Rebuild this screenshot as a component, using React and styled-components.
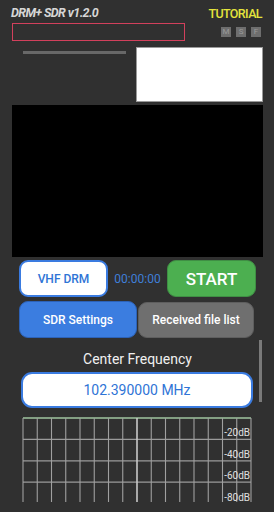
import React from "react";
import styled, { createGlobalStyle } from "styled-components";

const Global = createGlobalStyle`
  body {
    margin: 0;
    background: #303030;
    font-family: Roboto, "Liberation Sans", sans-serif;
  }
`;

const Screen = styled.div`
  width: 274px;
  height: 512px;
  overflow: hidden;
  background: #303030;
`;

const Header = styled.div`
  display: flex;
  justify-content: space-between;
  align-items: center;
  padding: 5px 12px 0 11px;
  height: 14px;
`;

const Title = styled.div`
  font-size: 12.5px;
  font-weight: bold;
  font-style: italic;
  letter-spacing: -0.6px;
  color: #d6d6d6;
`;

const Tutorial = styled.div`
  font-size: 12.5px;
  font-weight: 500;
  letter-spacing: -0.6px;
  color: #e4e43c;
  margin-top: 2px;
`;

const StatusRow = styled.div`
  display: flex;
  justify-content: space-between;
  align-items: center;
  padding: 4px 13px 0 12px;
`;

const StatusBox = styled.div`
  width: 171px;
  height: 16px;
  border: 1.5px solid #d2405c;
`;

const Modes = styled.div`
  display: flex;
  gap: 5px;
`;

const ModeKey = styled.div`
  width: 10px;
  height: 10px;
  background: #6e6e6e;
  color: #9a9a9a;
  font-size: 8px;
  line-height: 10px;
  text-align: center;
`;

const InfoRow = styled.div`
  display: flex;
  align-items: flex-start;
  padding: 6px 11px 0 23px;
`;

const Level = styled.div`
  width: 103px;
  height: 3px;
  margin-top: 4px;
  background: #686868;
`;

const Logo = styled.div`
  margin-left: auto;
  width: 125px;
  height: 53px;
  background: #ffffff;
  border: 0.5px solid #9a9a9a;
`;

const Display = styled.div`
  margin: 3px 11px 0 12px;
  height: 152px;
  background: #000000;
`;

const ButtonRow = styled.div`
  display: flex;
  align-items: center;
  padding: ${(p) => p.$pad};
  gap: ${(p) => p.$gap || 0}px;
`;

const Button = styled.div`
  box-sizing: border-box;
  width: ${(p) => p.$w}px;
  height: ${(p) => p.$h}px;
  border-radius: 9px;
  display: flex;
  align-items: center;
  justify-content: center;
  font-size: ${(p) => p.$size || 12}px;
  font-weight: 500;
  background: ${(p) => p.$bg};
  color: ${(p) => p.$fg};
  border: ${(p) => p.$border};
`;

const Clock = styled.div`
  width: 59px;
  text-align: center;
  font-size: 12px;
  color: #3f7fd8;
`;

const Panel = styled.div`
  position: relative;
  padding-top: 13px;
`;

const ScrollThumb = styled.div`
  position: absolute;
  right: 12px;
  top: 2px;
  width: 3px;
  height: 62px;
  background: #7a7a7a;
`;

const Label = styled.div`
  text-align: center;
  font-size: 14px;
  color: #f0f0f0;
  padding-left: 1px;
`;

const FreqBox = styled.div`
  box-sizing: border-box;
  margin: 5px 21px 0 21px;
  height: 36px;
  border-radius: 11px;
  background: #ffffff;
  border: 2px solid #3a7be0;
  display: flex;
  align-items: center;
  justify-content: center;
  font-size: 14px;
  color: #2f74d6;
  padding-bottom: 1px;
`;

const Spectrum = styled.div`
  margin: 9px 0 0 22px;
  width: 230px;
  height: 86px;
`;

const SpectrumGrid = () => {
  const left = 1;
  const right = 229;
  const top = 1;
  const bottom = 85;
  const cols = 16;
  const rowH = 21.4;
  const xs = Array.from({ length: cols + 1 }, (_, i) => left + ((right - left) * i) / cols);
  const ys = [0, 1, 2, 3].map((i) => top + rowH * i);
  return (
    <svg width="230" height="86" viewBox="0 0 230 86">
      {ys.map((y, i) => (
        <line key={"h" + i} x1={left} x2={right} y1={y} y2={y} stroke={i === 0 ? "#9fc59f" : "#9a9a9a"} strokeWidth="1.3" />
      ))}
      {xs.map((x, i) => (
        <line
          key={"v" + i}
          x1={x}
          x2={x}
          y1={top}
          y2={bottom}
          stroke={i === 8 ? "#c8c8c8" : "#a0a0a0"}
          strokeWidth={i === 8 ? 1.6 : 1.1}
        />
      ))}
      {["-20dB", "-40dB", "-60dB", "-80dB"].map((t, i) => (
        <text
          key={t}
          x={right - 1}
          y={top + rowH * (i + 1) - 3}
          textAnchor="end"
          fontSize="10"
          fontFamily="Roboto, 'Liberation Sans', sans-serif"
          fill="#e0e0e0"
        >
          {t}
        </text>
      ))}
    </svg>
  );
};

const App = () => {
  return (
    <Screen>
      <Global />
      <Header>
        <Title>DRM+ SDR v1.2.0</Title>
        <Tutorial>TUTORIAL</Tutorial>
      </Header>
      <StatusRow>
        <StatusBox />
        <Modes>
          <ModeKey>M</ModeKey>
          <ModeKey>S</ModeKey>
          <ModeKey>F</ModeKey>
        </Modes>
      </StatusRow>
      <InfoRow>
        <Level />
        <Logo />
      </InfoRow>
      <Display />
      <ButtonRow $pad="3px 0 0 19px">
        <Button $w={89} $h={37} $bg="#ffffff" $fg="#2f74d6" $border="2px solid #3a7be0">
          VHF DRM
        </Button>
        <Clock>00:00:00</Clock>
        <Button $w={89} $h={37} $bg="#4caf50" $fg="#ffffff" $size={17} $border="1px solid #3f8f44">
          START
        </Button>
      </ButtonRow>
      <ButtonRow $pad="4px 0 0 19px" $gap={1}>
        <Button $w={118} $h={37} $bg="#3b7de0" $fg="#ffffff" $border="1px solid #2c62b8">
          SDR Settings
        </Button>
        <Button $w={116} $h={36} $bg="#6f6f6f" $fg="#ffffff" $border="1px solid #5e5e5e">
          Received file list
        </Button>
      </ButtonRow>
      <Panel>
        <ScrollThumb />
        <Label>Center Frequency</Label>
        <FreqBox>102.390000 MHz</FreqBox>
        <Spectrum>
          <SpectrumGrid />
        </Spectrum>
      </Panel>
    </Screen>
  );
};

export default App;
